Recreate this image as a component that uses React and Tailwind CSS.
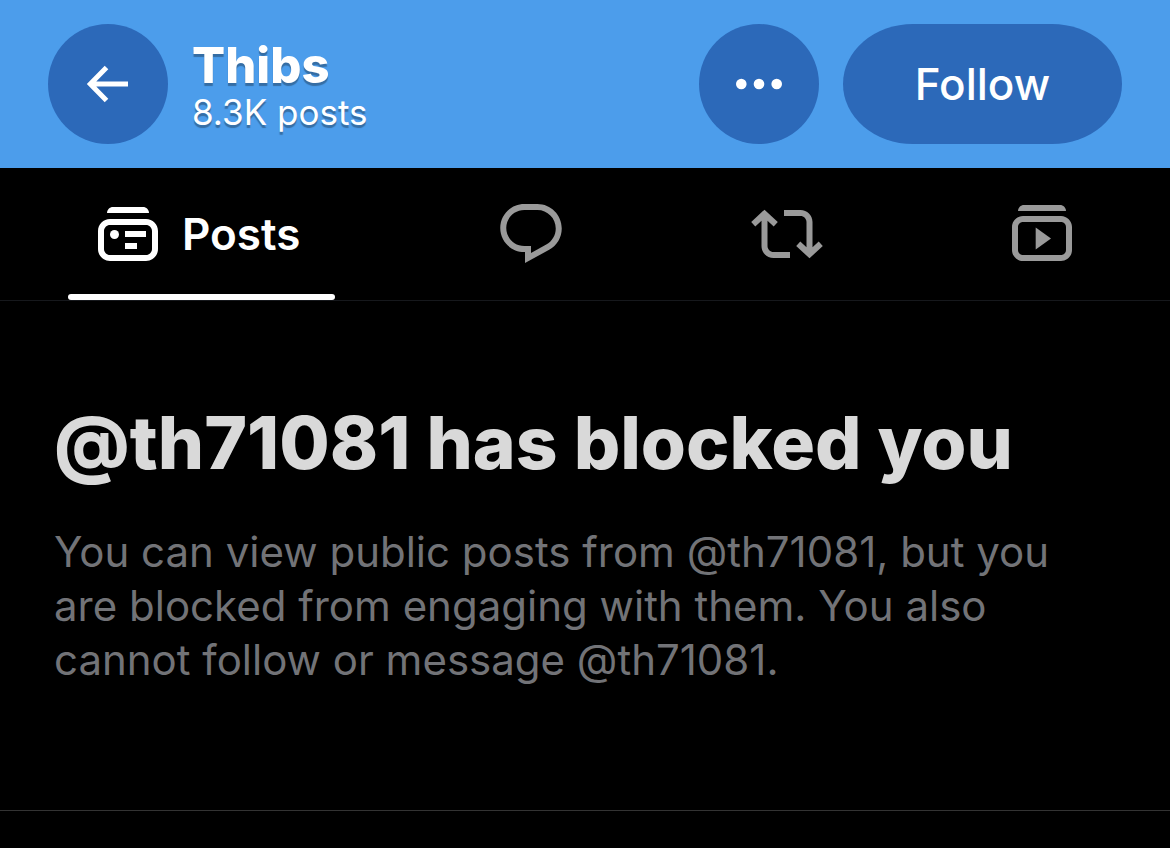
import React, { useState } from "react";

const icons = {
  posts: (
    <>
      <path d="M15 15c0-3.300 2.700-6 6-6h30c3.300 0 6 2.700 6 6H15z" />
      <path fillRule="evenodd" d="M18 21h36c6.600 0 12 5.400 12 12v18c0 6.600-5.400 12-12 12H18c-6.600 0-12-5.400-12-12V33c0-6.600 5.400-12 12-12zm0 6c-3.300 0-6 2.700-6 6v18c0 3.300 2.700 6 6 6h36c3.300 0 6-2.700 6-6V33c0-3.300-2.700-6-6-6H18z" />
      <circle cx="22.500" cy="36.500" r="4.500" />
      <path d="M33 33h21v6H33zM33 45h12v6H33z" />
    </>
  ),
  replies: (
    <path transform="scale(3)" d="M1.751 10c0-4.420 3.584-8 8.005-8h4.366c4.490 0 8.129 3.640 8.129 8.130 0 2.960-1.607 5.680-4.196 7.110l-8.054 4.460v-3.690h-.067c-4.490.100-8.183-3.510-8.183-8.010zm8.005-6c-3.317 0-6.005 2.690-6.005 6 0 3.370 2.770 6.080 6.138 6.010l.351-.010h1.761v2.300l5.087-2.810c1.951-1.080 3.163-3.130 3.163-5.360 0-3.390-2.744-6.130-6.129-6.130H9.756z" />
  ),
  reposts: (
    <path transform="scale(3)" d="M4.500 3.880l4.432 4.140-1.364 1.460L5.500 7.550V16c0 1.100.896 2 2 2H13v2H7.500c-2.209 0-4-1.790-4-4V7.550L1.432 9.480.068 8.020 4.500 3.880zM16.500 6H11V4h5.500c2.209 0 4 1.790 4 4v8.450l2.068-1.930 1.364 1.460-4.432 4.140-4.432-4.140 1.364-1.460 2.068 1.930V8c0-1.100-.896-2-2-2z" />
  ),
  videos: (
    <>
      <path d="M12 13c0-3.300 2.700-6 6-6h36c3.300 0 6 2.700 6 6H12z" />
      <path fillRule="evenodd" d="M17 18h38c6 0 11 5 11 11v23c0 6-5 11-11 11H17c-6 0-11-5-11-11V29c0-6 5-11 11-11zm0 6c-2.800 0-5 2.200-5 5v23c0 2.800 2.200 5 5 5h38c2.800 0 5-2.200 5-5V29c0-2.800-2.200-5-5-5H17z" />
      <path d="M29.700 29.500v22L45 40.500z" />
    </>
  ),
};

const otherTabs = [
  { id: "replies", name: "Replies" },
  { id: "reposts", name: "Reposts" },
  { id: "videos", name: "Videos" },
];

function TabIcon({ id }) {
  return (
    <svg viewBox="0 0 72 72" className="size-[72px] shrink-0" fill="currentColor" aria-hidden="true">
      {icons[id]}
    </svg>
  );
}

export default function App() {
  const [following, setFollowing] = useState(false);

  return (
    <div className="min-h-screen bg-black font-['Inter',sans-serif]">
      <header className="flex items-center gap-6 bg-[#4c9deb] px-12 py-6 text-white">
        <button aria-label="Back" className="flex size-[120px] shrink-0 items-center justify-center rounded-full bg-[#2c69b9]">
          <svg viewBox="0 0 60 60" className="size-[60px]" fill="none" stroke="currentColor" strokeWidth="5" aria-hidden="true">
            <path d="M50 30H13M28.500 13.500L12.300 30l16.200 16.500" />
          </svg>
        </button>
        <div className="min-w-0 flex-1 pt-1 [text-shadow:0_3px_1px_rgba(0,0,0,0.3)]">
          <h1 className="text-[49px] leading-[52px] font-extrabold">Thibs</h1>
          <p className="text-[35px] leading-[40px]">8.3K posts</p>
        </div>
        <button aria-label="More" className="flex size-[120px] shrink-0 items-center justify-center rounded-full bg-[#2c69b9]">
          <svg viewBox="0 0 60 60" className="size-[60px]" fill="currentColor" aria-hidden="true">
            <circle cx="12.300" cy="30" r="5.300" />
            <circle cx="30" cy="30" r="5.300" />
            <circle cx="47.700" cy="30" r="5.300" />
          </svg>
        </button>
        <button
          onClick={() => setFollowing(!following)}
          className="h-[120px] min-w-[279px] rounded-[70px/60px] bg-[#2c69b9] px-12 text-[44px] font-medium"
        >
          {following ? "Following" : "Follow"}
        </button>
      </header>

      <nav className="flex h-[133px] border-b border-[#16181c] text-[#9a9a9a]">
        <button className="flex flex-col px-[68px] text-white">
          <span className="flex min-w-[267px] flex-1 items-center gap-[18px] px-6 pt-1.5">
            <TabIcon id="posts" />
            <span className="text-[44px] font-semibold">Posts</span>
          </span>
          <span className="h-1.5 w-full rounded-full bg-white" />
        </button>
        {otherTabs.map((tab) => (
          <button key={tab.id} aria-label={tab.name} className="flex flex-1 items-center justify-center">
            <TabIcon id={tab.id} />
          </button>
        ))}
      </nav>

      <main className="border-b border-[#333] px-[54px] pt-24 pb-[123px]">
        <h2 className="text-[73px] leading-[92px] font-extrabold text-[#d9d9d9]">@th71081 has blocked you</h2>
        <p className="mt-9 text-[42px] leading-[54px] text-[#727377]">
          You can view public posts from @th71081, but you are blocked from engaging with them. You also cannot follow or message @th71081.
        </p>
      </main>
    </div>
  );
}
